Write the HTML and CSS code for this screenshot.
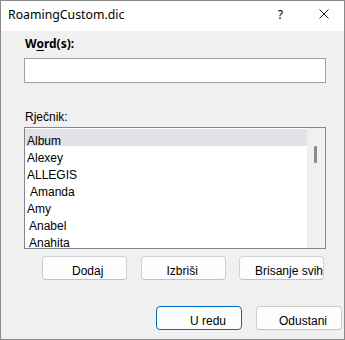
FILE: index.html
```html
<!DOCTYPE html>
<html>
<head>
  <meta charset="UTF-8">
  <title>RoamingCustom.dic</title>
  <link rel="stylesheet" href="styles.css">
</head>
<body>

  <div class="dialog">
    <div class="titlebar">
      <span class="title">RoamingCustom.dic</span>
      <span class="help">?</span>
      <svg class="close" width="10" height="10" viewBox="0 0 10 10">
        <path d="M0.5 0.5 L9.5 9.5 M9.5 0.5 L0.5 9.5" stroke="#1a1a1a" stroke-width="1" fill="none"/>
      </svg>
    </div>

    <div class="content">
      <div class="word-label">W<u>o</u>rd(s):</div>
      <input class="word-input" type="text">

      <div class="dict-label">Rječnik:</div>
      <div class="listbox">
        <ul class="items">
          <li class="selected">Album</li>
          <li>Alexey</li>
          <li>ALLEGIS</li>
          <li class="indent3">Amanda</li>
          <li>Amy</li>
          <li class="indent2">Anabel</li>
          <li class="indent2">Anahita</li>
        </ul>
        <div class="scrollbar"><div class="thumb"></div></div>
      </div>

      <div class="list-buttons">
        <button class="btn btn-add">Dodaj</button>
        <button class="btn btn-delete">Izbriši</button>
        <button class="btn btn-clear">Brisanje svih</button>
      </div>
    </div>

    <div class="footer">
      <button class="btn btn-ok">U redu</button>
      <button class="btn btn-cancel">Odustani</button>
    </div>
  </div>

</body>
</html>
```

FILE: styles.css
```css
body { margin: 0; font-family: "Liberation Sans", Arial, sans-serif; font-size: 12px; color: #000; }
.dialog { width: 345px; height: 340px; box-sizing: border-box; border: 1px solid #8a8a8a; background: #f0f0f0; }

.titlebar { display: flex; align-items: flex-start; height: 30px; box-sizing: border-box; padding: 6px 0 0 7px; background: #fff; font-family: "Noto Sans", sans-serif; font-size: 12.3px; line-height: 16px; }
.title { flex: 1; }
.help { margin-right: 36px; }
.close { margin-top: 2px; margin-right: 15px; }

.content { padding: 0 17px 0 23px; }
.word-label { margin-top: 5px; font-family: "Noto Sans", sans-serif; font-weight: bold; font-size: 12px; line-height: 16px; padding-left: 1px; }
.word-label u { text-underline-offset: 2px; }
.word-input { display: block; margin: 6px 0 0 0; width: 302px; height: 25px; box-sizing: border-box; border: 1px solid #a0a0a0; background: #fff; padding: 0 4px; }

.dict-label { margin-top: 27px; line-height: 14px; padding-left: 1px; }
.listbox { display: flex; margin-top: 3px; width: 302px; height: 122px; box-sizing: border-box; border: 1px solid #82868e; background: #fff; }
.items { list-style: none; margin: 0; padding: 1px 0 0 0; flex: 1; overflow: hidden; }
.items li { height: 17px; box-sizing: border-box; padding: 5px 0 0 2px; line-height: 14px; white-space: nowrap; }
.items li.selected { background: #e1e1e6; }
.items li.indent2 { padding-left: 4px; }
.items li.indent3 { padding-left: 5px; }
.scrollbar { width: 18px; background: #f0f0f0; }
.thumb { width: 3px; height: 17px; margin: 18px 0 0 7px; background: #8a8a8a; border-radius: 1px; }

.list-buttons { display: flex; gap: 13.5px; margin-top: 7px; padding-left: 18px; }

.btn { height: 24px; box-sizing: border-box; border: 1px solid #d0d0d0; border-bottom-color: #c2c2c2; border-radius: 4px; background: #fdfdfd; font-family: "Liberation Sans", Arial, sans-serif; font-size: 12px; color: #000; line-height: 14px; padding: 5px 0 0 0; text-align: left; white-space: nowrap; }
.list-buttons .btn { width: 85px; }
.btn-add { padding-left: 29px; }
.btn-delete { padding-left: 25px; }
.btn-clear { padding-left: 15px; }

.footer { display: flex; justify-content: flex-end; gap: 14px; margin-top: 26px; padding-right: 2px; }
.footer .btn { width: 86px; }
.btn-ok { border-color: #0067c0; padding-left: 33px; }
.btn-cancel { padding-left: 22px; }
```
